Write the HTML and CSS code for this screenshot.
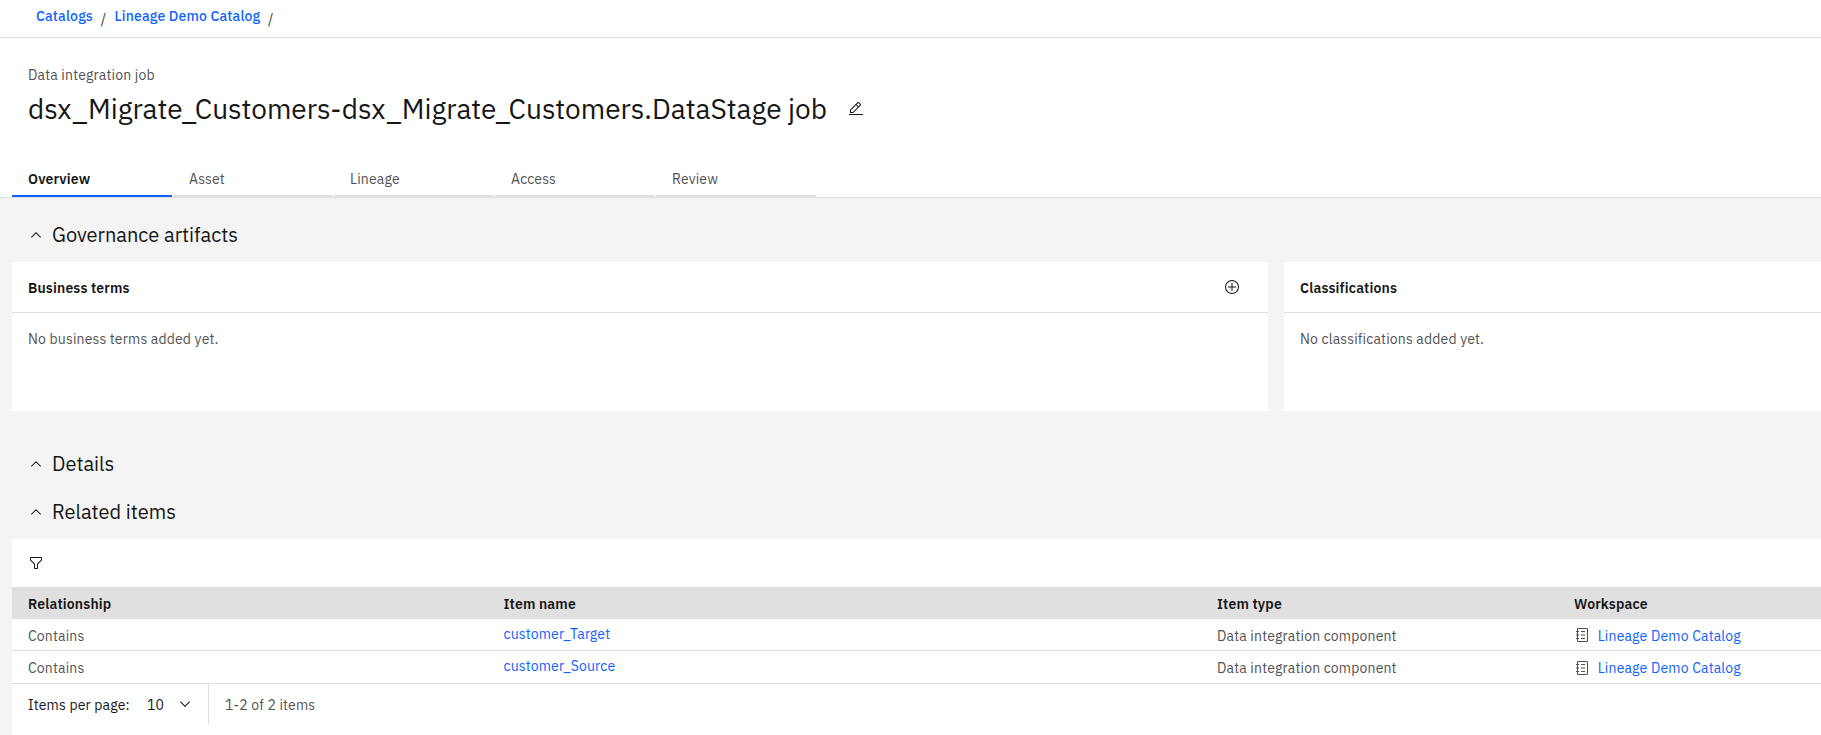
FILE: index.html
```html
<!DOCTYPE html>
<html lang="en">
<head>
<meta charset="utf-8">
<title>dsx_Migrate_Customers-dsx_Migrate_Customers.DataStage job</title>
<link rel="stylesheet" href="styles.css">
</head>
<body>
<svg class="defs" width="0" height="0" aria-hidden="true">
  <symbol id="chevron-up" viewBox="0 0 16 16"><path d="M8 5l5 5-.7.7L8 6.4l-4.3 4.3L3 10z"/></symbol>
  <symbol id="chevron-down" viewBox="0 0 16 16"><path d="M8 11L3 6l.7-.7L8 9.6l4.3-4.3.7.7z"/></symbol>
  <symbol id="edit" viewBox="0 0 32 32"><path d="M2 26h28v2H2zM25.4 9c.8-.8.8-2 0-2.800l-3.600-3.600c-.8-.8-2-.8-2.800 0l-15 15V24h6.400zM20.400 4L24 7.600l-3 3L17.400 7zM6 22v-3.600l10-10 3.600 3.600-10 10z"/></symbol>
  <symbol id="add" viewBox="0 0 32 32"><path d="M16 4a12 12 0 1 1 0 24 12 12 0 0 1 0-24m0-2a14 14 0 1 0 0 28 14 14 0 0 0 0-28z"/><path d="M24 15h-7V8h-2v7H8v2h7v7h2v-7h7z"/></symbol>
  <symbol id="filter" viewBox="0 0 32 32"><path d="M18 28h-4a2 2 0 0 1-2-2v-7.590L4.590 11A2 2 0 0 1 4 9.590V6a2 2 0 0 1 2-2h20a2 2 0 0 1 2 2v3.590a2 2 0 0 1-.59 1.410L20 18.410V26a2 2 0 0 1-2 2zM6 6v3.590l8 8V26h4v-8.410l8-8V6z"/></symbol>
  <symbol id="catalog" viewBox="0 0 32 32"><path d="M26 2H8a2 2 0 0 0-2 2v4H4v2h2v5H4v2h2v5H4v2h2v4a2 2 0 0 0 2 2h18a2 2 0 0 0 2-2V4a2 2 0 0 0-2-2zm0 26H8v-4h2v-2H8v-5h2v-2H8v-5h2V8H8V4h18z"/><path d="M14 8h8v2h-8zM14 15h8v2h-8zM14 22h8v2h-8z"/></symbol>
</svg>

<nav class="breadcrumb">
  <a>Catalogs</a><span class="slash">/</span><a>Lineage Demo Catalog</a><span class="slash">/</span>
</nav>

<header class="page-header">
  <p class="asset-type">Data integration job</p>
  <div class="title-row">
    <h1>dsx_Migrate_Customers-dsx_Migrate_Customers.DataStage job</h1>
    <svg class="icon"><use href="#edit"/></svg>
  </div>
  <div class="tabs">
    <div class="tab active">Overview</div>
    <div class="tab">Asset</div>
    <div class="tab">Lineage</div>
    <div class="tab">Access</div>
    <div class="tab">Review</div>
  </div>
</header>

<main>
  <h2 class="section governance"><svg class="icon"><use href="#chevron-up"/></svg>Governance artifacts</h2>
  <div class="cards">
    <section class="card">
      <div class="card-head"><h3>Business terms</h3><svg class="icon"><use href="#add"/></svg></div>
      <p>No business terms added yet.</p>
    </section>
    <section class="card">
      <div class="card-head"><h3>Classifications</h3></div>
      <p>No classifications added yet.</p>
    </section>
  </div>

  <h2 class="section details"><svg class="icon"><use href="#chevron-up"/></svg>Details</h2>
  <h2 class="section"><svg class="icon"><use href="#chevron-up"/></svg>Related items</h2>

  <section class="related">
    <div class="toolbar"><svg class="icon"><use href="#filter"/></svg></div>
    <div class="row head">
      <div>Relationship</div><div>Item name</div><div>Item type</div><div>Workspace</div>
    </div>
    <div class="row">
      <div>Contains</div><a class="item">customer_Target</a><div>Data integration component</div>
      <div class="workspace"><svg class="icon"><use href="#catalog"/></svg><a>Lineage Demo Catalog</a></div>
    </div>
    <div class="row last">
      <div>Contains</div><a class="item">customer_Source</a><div>Data integration component</div>
      <div class="workspace"><svg class="icon"><use href="#catalog"/></svg><a>Lineage Demo Catalog</a></div>
    </div>
    <footer class="pagination">
      <div class="page-size"><span class="label">Items per page:</span><span class="value">10</span><svg class="icon"><use href="#chevron-down"/></svg></div>
      <span class="range">1-2 of 2 items</span>
    </footer>
  </section>
</main>
</body>
</html>
```

FILE: styles.css
```css
* { box-sizing: border-box; }

body {
  margin: 0;
  height: 735px;
  display: flex;
  flex-direction: column;
  overflow: hidden;
  background: #f4f4f4;
  color: #161616;
  font: 14px/18px "IBM Plex Sans", Roboto, sans-serif;
  letter-spacing: 0.16px;
}

h1, h2, h3, p { margin: 0; font-weight: 400; }
a { color: #0f62fe; }
.defs { position: absolute; }
.icon { width: 16px; height: 16px; flex: none; fill: currentColor; }

.breadcrumb {
  display: flex;
  height: 38px;
  padding: 7px 0 0 36px;
  background: #fff;
  border-bottom: 1px solid #e0e0e0;
}
.breadcrumb a { font-weight: 500; }
.slash { width: 21.600px; padding: 3px 0 0 7.800px; color: #393939; }

.page-header {
  height: 160px;
  background: #fff;
  border-bottom: 1px solid #e0e0e0;
}
.asset-type { padding: 28px 0 0 28px; color: #525252; }
.title-row { display: flex; align-items: center; gap: 21px; padding: 7px 0 0 28px; }
h1 { font-size: 28px; line-height: 36px; letter-spacing: 0; }

.tabs { display: flex; gap: 1px; margin: 32px 0 0 12px; }
.tab {
  width: 160px;
  height: 38px;
  padding: 11px 16px 0;
  color: #525252;
  border-bottom: 2px solid #e0e0e0;
}
.tab.active {
  color: #161616;
  font-weight: 600;
  border-bottom-color: #0f62fe;
}

main { flex: 1; display: flex; flex-direction: column; padding-left: 12px; }

.section {
  display: flex;
  align-items: center;
  gap: 8px;
  height: 48px;
  padding-left: 16px;
  font-size: 20px;
  line-height: 28px;
  letter-spacing: 0;
}
.section.governance { height: 64px; padding-top: 10px; }
.section.details { margin-top: 29px; }

.cards { display: grid; grid-template-columns: 1256px 1fr; gap: 16px; height: 149px; }
.card { background: #fff; color: #525252; }
.card-head {
  display: flex;
  align-items: center;
  justify-content: space-between;
  height: 51px;
  padding: 0 28px 0 16px;
  border-bottom: 1px solid #e0e0e0;
}
.card h3 { padding-top: 2px; color: #161616; font-size: 14px; font-weight: 600; }
.card .icon { color: #161616; }
.card p { padding: 17px 16px; }

.related { flex: 1; margin-top: 3px; background: #fff; }
.toolbar { height: 48px; padding: 16px; }

.row {
  display: grid;
  grid-template-columns: 475.5px 713.5px 357px 1fr;
  height: 32px;
  padding: 8px 0 0 16px;
  border-bottom: 1px solid #e0e0e0;
  color: #525252;
}
.row.last { height: 33px; }
.row.head { background: #e0e0e0; color: #161616; font-weight: 600; }
.item { margin-top: -2px; }
.workspace { display: flex; gap: 7.700px; }
.last .icon { margin-top: 1px; }

.pagination { display: flex; height: 40px; }
.page-size {
  display: flex;
  align-items: center;
  width: 197px;
  padding-left: 16px;
  border-right: 1px solid #e0e0e0;
}
.label { width: 119px; }
.value { width: 30px; }
.label, .value { padding-top: 2px; }
.range { padding: 12px 0 0 16px; color: #525252; }
```
